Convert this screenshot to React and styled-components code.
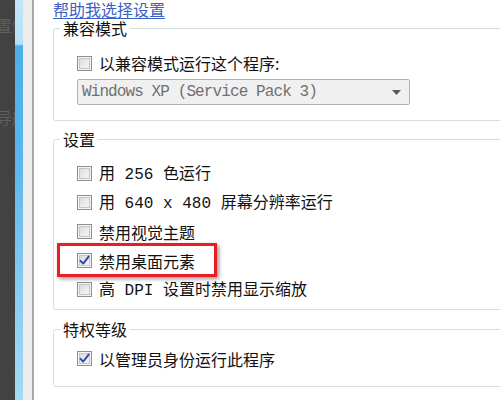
import React from "react";
import styled, { createGlobalStyle } from "styled-components";

const Global = createGlobalStyle`
  html, body { margin: 0; padding: 0; background: #ffffff; overflow: hidden; }
  body { font-family: "Noto Sans CJK SC", "Noto Sans", sans-serif; }
`;

const Page = styled.div`
  display: flex;
  width: 500px;
  height: 400px;
  overflow: hidden;
  background: #ffffff;
`;

const DarkStrip = styled.div`
  width: 15px;
  flex: none;
  background: #424242;
  overflow: hidden;
  display: flex;
  flex-direction: column;
`;

const Ghost = styled.div`
  margin-top: ${(p) => p.$top}px;
  margin-left: -4px;
  white-space: nowrap;
  font-size: 16px;
  line-height: 18px;
  color: #5e5e5e;
`;

const BlueStrip = styled.div`
  width: 8px;
  flex: none;
  background: linear-gradient(
    to bottom,
    #c2e5f8 0px,
    #b8e0f6 44px,
    #4eaeea 46px,
    #5ab6ed 160px,
    #8ccdf1 300px,
    #a3d9f4 400px
  );
`;

const GreyStrip = styled.div`
  width: 9px;
  flex: none;
  background: #ececec;
  border-right: 2px solid #a9a9a9;
`;

const Content = styled.div`
  flex: 1;
  min-width: 0;
  padding-left: 19px;
  overflow: hidden;
  font-size: 16px;
  line-height: 16px;
  color: #111111;
`;

const LinkLine = styled.div`
  height: 20px;
  line-height: 19px;
`;

const HelpLink = styled.a`
  font-size: 16px;
  color: #3a62c4;
  text-decoration: underline;
  text-underline-offset: 2px;
  cursor: pointer;
`;

const Group = styled.fieldset`
  margin: ${(p) => p.$mt}px -30px 0 0;
  padding: 0;
  min-width: 0;
  border: 1px solid #d5dee6;
  border-radius: 3px;
`;

const Legend = styled.legend`
  margin-left: 6px;
  padding: 0 3px;
  font-size: 16px;
  line-height: 16px;
  height: 16px;
  color: #111111;
`;

const GroupBody = styled.div`
  padding: ${(p) => p.$pt}px 0 ${(p) => p.$pb}px 23px;
  display: flex;
  flex-direction: column;
`;

const Row = styled.div`
  position: relative;
  display: flex;
  align-items: center;
  gap: 7px;
  height: ${(p) => p.$h}px;
  white-space: nowrap;
  line-height: 16px;
`;

const Mono = styled.span`
  font-family: "Liberation Mono", monospace;
  font-size: 16px;
  white-space: pre;
`;

const Box = styled.span`
  width: 13px;
  height: 13px;
  flex: none;
  border: 1px solid #8e8f8f;
  background: linear-gradient(135deg, #d4d4d4 0%, #eeeeee 60%, #f8f8f8 100%);
  box-shadow: inset 0 0 0 1px #f4f4f4, inset 0 0 0 2px #c6c6c6;
  position: relative;
  display: flex;
  align-items: center;
  justify-content: center;
`;

const Highlight = styled.div`
  position: absolute;
  left: -20px;
  top: -3px;
  width: 154px;
  height: 28px;
  border: 3px solid #ec1c24;
  box-shadow: 2px 2px 4px rgba(0, 0, 0, 0.4);
  pointer-events: none;
`;

const Select = styled.div`
  margin-top: 6px;
  width: 333px;
  height: 26px;
  box-sizing: border-box;
  border: 1px solid #b3b3b3;
  border-radius: 2px;
  background: #f0f0f0;
  display: flex;
  align-items: center;
  justify-content: space-between;
  padding: 0 8px 0 4px;
`;

const SelectText = styled(Mono)`
  color: #707070;
  letter-spacing: -0.9px;
`;

function Check({ checked }) {
  return (
    <Box>
      {checked && (
        <svg width="11" height="11" viewBox="0 0 11 11">
          <path
            d="M1.5 5.8 L4.2 8.6 L9.6 1.6"
            fill="none"
            stroke="#2b4aa6"
            strokeWidth="1.9"
            strokeLinecap="round"
            strokeLinejoin="round"
          />
        </svg>
      )}
    </Box>
  );
}

function Option({ checked, children, h = 29, highlight }) {
  return (
    <Row $h={h}>
      {highlight && <Highlight />}
      <Check checked={checked} />
      <span>{children}</span>
    </Row>
  );
}

export default function App() {
  return (
    <>
      <Global />
      <Page>
        <DarkStrip>
          <Ghost $top={16}>置性</Ghost>
          <Ghost $top={74}>导航</Ghost>
        </DarkStrip>
        <BlueStrip />
        <GreyStrip />
        <Content>
          <LinkLine>
            <HelpLink>帮助我选择设置</HelpLink>
          </LinkLine>
          <Group $mt={0}>
            <Legend>兼容模式</Legend>
            <GroupBody $pt={17} $pb={15}>
              <Option h={20}>以兼容模式运行这个程序:</Option>
              <Select>
                <SelectText>Windows XP (Service Pack 3)</SelectText>
                <svg width="9" height="5" viewBox="0 0 9 5">
                  <path d="M0 0 H9 L4.5 5 Z" fill="#5a5a5a" />
                </svg>
              </Select>
            </GroupBody>
          </Group>
          <Group $mt={10}>
            <Legend>设置</Legend>
            <GroupBody $pt={12} $pb={5}>
              <Option>
                用<Mono> 256 </Mono>色运行
              </Option>
              <Option>
                用<Mono> 640 x 480 </Mono>屏幕分辨率运行
              </Option>
              <Option>禁用视觉主题</Option>
              <Option checked highlight>
                禁用桌面元素
              </Option>
              <Option>
                高<Mono> DPI </Mono>设置时禁用显示缩放
              </Option>
            </GroupBody>
          </Group>
          <Group $mt={11}>
            <Legend>特权等级</Legend>
            <GroupBody $pt={7} $pb={13}>
              <Option checked>以管理员身份运行此程序</Option>
            </GroupBody>
          </Group>
        </Content>
      </Page>
    </>
  );
}
